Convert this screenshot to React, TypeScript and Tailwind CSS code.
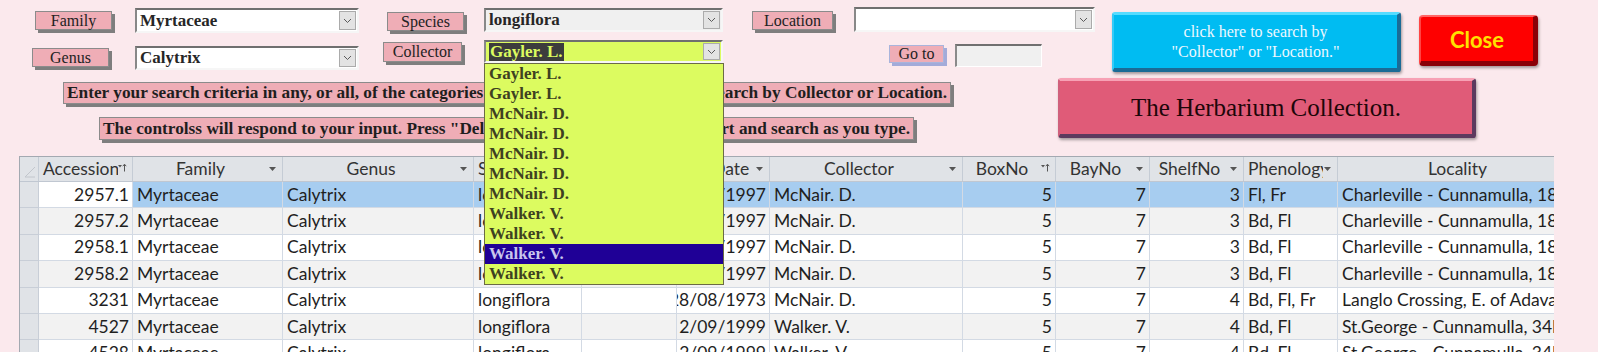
import React from "react";

const SERIF = "font-['Liberation_Serif',serif]";
const SANS = "font-['Lato',sans-serif]";

type P = { className?: string; children?: React.ReactNode };

function Chevron() {
  return (
    <svg width="9" height="6" viewBox="0 0 9 6">
      <path d="M1 1 L4.5 4.5 L8 1" fill="none" stroke="#5a5a5a" strokeWidth="1" />
    </svg>
  );
}

function Combo({ className = "", bg = "bg-white", children }: P & { bg?: string }) {
  return (
    <div
      className={`shrink-0 flex items-stretch border-t-2 border-l-2 border-b-2 border-r-2 border-t-[#6f6f6f] border-l-[#888888] border-b-[#f6f6f6] border-r-[#f6f6f6] ${bg} ${className}`}
    >
      <div
        className={`flex-1 flex items-center pl-[3px] ${SERIF} font-bold text-[17px] text-[#262626] overflow-hidden whitespace-nowrap`}
      >
        {children}
      </div>
      <div className="w-[17px] my-[1px] mr-[1px] bg-[#e3e3e3] border border-[#ababab] flex items-center justify-center">
        <Chevron />
      </div>
    </div>
  );
}

function Label({ className = "", children }: P) {
  return (
    <div
      className={`shrink-0 flex items-center justify-center bg-[#efadb6] border border-[#8b8b8b] shadow-[3px_3px_0_#7e7e7e] ${SERIF} text-[16px] text-[#222] leading-none ${className}`}
    >
      {children}
    </div>
  );
}

function DownTri() {
  return (
    <svg width="7" height="4" viewBox="0 0 7 4" className="absolute right-[6px] top-[10px]">
      <path d="M0 0 H7 L3.5 4 Z" fill="#555" />
    </svg>
  );
}

function SortIcon() {
  return (
    <svg width="9" height="9" viewBox="0 0 9 9" className="absolute right-[5px] top-[6px]">
      <path d="M0 2 H4 L2 4.5 Z" fill="#555" />
      <path d="M6.5 8.5 V1.5" stroke="#555" strokeWidth="1" />
      <path d="M4.8 3.2 L6.5 1.2 L8.2 3.2" fill="none" stroke="#555" strokeWidth="1" />
    </svg>
  );
}

type HProps = {
  children?: React.ReactNode;
  arrow?: boolean;
  sort?: boolean;
  left?: boolean;
};

function HCell({ children, arrow, sort, left }: HProps) {
  const mr = arrow || sort ? "mr-[14px]" : "";
  return (
    <div className="relative h-full border-r border-[#c5ccd5] bg-[#e0e3e7] flex items-center overflow-hidden">
      <div className={`flex-1 min-w-0 flex overflow-hidden ${left ? "justify-start pl-[4px]" : "justify-center"} ${mr}`}>
        <span className="whitespace-nowrap">{children}</span>
      </div>
      {arrow && <DownTri />}
      {sort && <SortIcon />}
    </div>
  );
}

type Row = {
  acc: string;
  date: string;
  col: string;
  shelf: string;
  phen: string;
  loc: string;
};

const rows: Row[] = [
  { acc: "2957.1", date: "14/09/1997", col: "McNair. D.", shelf: "3", phen: "Fl, Fr", loc: "Charleville - Cunnamulla, 18 km S of Charleville" },
  { acc: "2957.2", date: "14/09/1997", col: "McNair. D.", shelf: "3", phen: "Bd, Fl", loc: "Charleville - Cunnamulla, 18 km S of Charleville" },
  { acc: "2958.1", date: "14/09/1997", col: "McNair. D.", shelf: "3", phen: "Bd, Fl", loc: "Charleville - Cunnamulla, 18 km S of Charleville" },
  { acc: "2958.2", date: "14/09/1997", col: "McNair. D.", shelf: "3", phen: "Bd, Fl", loc: "Charleville - Cunnamulla, 18 km S of Charleville" },
  { acc: "3231", date: "28/08/1973", col: "McNair. D.", shelf: "4", phen: "Bd, Fl, Fr", loc: "Langlo Crossing, E. of Adavale" },
  { acc: "4527", date: "2/09/1999", col: "Walker. V.", shelf: "4", phen: "Bd, Fl", loc: "St.George - Cunnamulla, 34km W of St George" },
  { acc: "4528", date: "2/09/1999", col: "Walker. V.", shelf: "4", phen: "Bd, Fl", loc: "St.George - Cunnamulla, 34km W of St George" },
];

const GRID =
  "grid grid-cols-[19px_94px_150px_191px_108px_95px_93px_193px_93px_94px_94px_94px_240px]";

function Cell({ children, right, bg }: { children?: React.ReactNode; right?: boolean; bg: string }) {
  return (
    <div
      className={`h-full flex items-center overflow-hidden whitespace-nowrap border-r border-b border-[#d3dae4] ${bg} ${
        right ? "justify-end pr-[3px]" : "justify-start pl-[4px]"
      }`}
    >
      <span className="shrink-0">{children}</span>
    </div>
  );
}

const listItems = [
  "Gayler. L.",
  "Gayler. L.",
  "McNair. D.",
  "McNair. D.",
  "McNair. D.",
  "McNair. D.",
  "McNair. D.",
  "Walker. V.",
  "Walker. V.",
  "Walker. V.",
  "Walker. V.",
];

export default function App() {
  return (
    <div className="relative w-[1598px] h-[352px] bg-[#fbe9ed] overflow-hidden">
      {/* top form area */}
      <div className="flex h-[156px]">
        <div className="w-[1058px] shrink-0 flex flex-col">
          {/* row 1 */}
          <div className="flex items-start h-[38px] shrink-0">
            <Label className="ml-[35px] mt-[11px] w-[77px] h-[19px]">Family</Label>
            <Combo className="ml-[23px] mt-[8px] w-[224px] h-[25px]">Myrtaceae</Combo>
            <Label className="ml-[28px] mt-[12px] w-[77px] h-[19px]">Species</Label>
            <Combo className="ml-[20px] mt-[8px] w-[239px] h-[24px]" bg="bg-[#f0f0f0]">
              longiflora
            </Combo>
            <Label className="ml-[29px] mt-[11px] w-[81px] h-[19px]">Location</Label>
            <Combo className="ml-[21px] mt-[7px] w-[241px] h-[25px]" />
          </div>
          {/* row 2 */}
          <div className="flex items-start h-[42px] shrink-0">
            <Label className="ml-[32px] mt-[10px] w-[77px] h-[19px]">Genus</Label>
            <Combo className="ml-[26px] mt-[8px] w-[224px] h-[24px]">Calytrix</Combo>
            <Label className="ml-[24px] mt-[4px] w-[79px] h-[20px]">Collector</Label>
            <Combo className="ml-[22px] mt-[2px] w-[239px] h-[23px]" bg="bg-[#dcfb60]">
              <span className="bg-[#3c3c3c] text-[#dcfb60] px-[1px] leading-[18px]">Gayler. L.</span>
            </Combo>
            <div
              className={`shrink-0 ml-[166px] mt-[7px] w-[55px] h-[18px] flex items-center justify-center bg-[#efadb6] border border-[#a9b4dc] shadow-[3px_3px_0_#a3abd9] ${SERIF} text-[16px] text-[#222] leading-none`}
            >
              Go to
            </div>
            <div className="shrink-0 ml-[11px] mt-[6px] w-[87px] h-[23px] bg-[#f0f0f0] border-t-2 border-l-2 border-b border-r border-t-[#707070] border-l-[#8a8a8a] border-b-[#ffffff] border-r-[#ffffff]" />
          </div>
          {/* instruction lines */}
          <div
            className={`ml-[63px] mt-[2px] w-[888px] h-[22px] shrink-0 flex items-center justify-between px-[3px] bg-[#efadb6] border border-[#8b8b8b] shadow-[3px_3px_0_#7e7e7e] ${SERIF} font-bold text-[17.3px] text-[#1e1e1e] whitespace-nowrap overflow-hidden`}
          >
            <span>Enter your search criteria in any, or all, of the categories above.</span>
            <span>Or search by Collector or Location.</span>
          </div>
          <div
            className={`ml-[99px] mt-[13px] w-[815px] h-[23px] shrink-0 flex items-center justify-between px-[3px] bg-[#efadb6] border border-[#8b8b8b] shadow-[3px_3px_0_#7e7e7e] ${SERIF} font-bold text-[17.3px] text-[#1e1e1e] whitespace-nowrap overflow-hidden`}
          >
            <span>The controlss will respond to your input. Press "Delete"</span>
            <span>to clear, restart and search as you type.</span>
          </div>
        </div>

        {/* right buttons */}
        <div className="flex flex-col shrink-0">
          <div className="flex items-start">
            <div
              className={`ml-[54px] mt-[12px] w-[289px] h-[60px] rounded-[3px] bg-[#00bcf2] border-t-[3px] border-l-[2px] border-r-[4px] border-b-[4px] border-t-[#55dcff] border-l-[#33cbf8] border-r-[#1b6b96] border-b-[#1b6b96] shadow-[1px_2px_3px_rgba(0,0,0,0.35)] flex flex-col items-center justify-center ${SERIF} text-[16px] leading-[20px] text-[#eef8ff]`}
            >
              <span>click here to search by</span>
              <span>"Collector" or "Location."</span>
            </div>
            <div
              className={`ml-[18px] mt-[15px] w-[119px] h-[51px] rounded-[4px] bg-[#fe0000] border-t-[2px] border-l-[2px] border-r-[5px] border-b-[5px] border-t-[#ff6666] border-l-[#ff4444] border-r-[#8a0008] border-b-[#8a0008] shadow-[1px_2px_3px_rgba(0,0,0,0.35)] flex items-center justify-center ${SANS} font-bold text-[22px] text-[#ffe100]`}
            >
              Close
            </div>
          </div>
          <div
            className={`mt-[6px] w-[418px] h-[60px] rounded-[3px] bg-[#e05b78] border-t-[3px] border-l-[2px] border-r-[4px] border-b-[4px] border-t-[#f7a1b5] border-l-[#d0607c] border-r-[#5c3a5e] border-b-[#5c3a5e] shadow-[1px_2px_3px_rgba(0,0,0,0.35)] flex items-center justify-center ${SERIF} text-[25px] text-[#1d0609]`}
          >
            The Herbarium Collection.
          </div>
        </div>
      </div>

      {/* datasheet */}
      <div className={`ml-[19px] w-[1535px] overflow-hidden border-t border-l border-[#a3a9b1] ${SANS} text-[17.5px] text-[#1f1f1f]`}>
        <div className={`${GRID} h-[25px] text-[#333] border-b border-[#c0c7d1]`}>
          <div className="relative h-full bg-[#e0e3e7] border-r border-[#c5ccd5]">
            <svg width="12" height="12" viewBox="0 0 12 12" className="absolute left-[4px] bottom-[3px]">
              <path d="M11 1 L1 11 H11" fill="none" stroke="#c2c6cc" strokeWidth="1" />
            </svg>
          </div>
          <HCell left sort>
            Accession
          </HCell>
          <HCell arrow>Family</HCell>
          <HCell arrow>Genus</HCell>
          <HCell arrow left>
            Species
          </HCell>
          <HCell arrow>Subspecies</HCell>
          <HCell arrow>CollDate</HCell>
          <HCell arrow>Collector</HCell>
          <HCell sort>BoxNo</HCell>
          <HCell arrow>BayNo</HCell>
          <HCell arrow>ShelfNo</HCell>
          <HCell arrow left>
            Phenology
          </HCell>
          <HCell>Locality</HCell>
        </div>
        {rows.map((r, i) => {
          const base = i % 2 === 1 ? "bg-[#f2f2f2]" : "bg-white";
          const sel = i === 0 ? "bg-[#a7cdf0]" : base;
          return (
            <div key={i} className={`${GRID} h-[26.4px]`}>
              <div className="h-full bg-[#e0e3e7] border-r border-b border-[#c8ced7]" />
              <Cell right bg={i === 0 ? "bg-white" : base}>
                {r.acc}
              </Cell>
              <Cell bg={sel}>Myrtaceae</Cell>
              <Cell bg={sel}>Calytrix</Cell>
              <Cell bg={sel}>longiflora</Cell>
              <Cell bg={sel}>{""}</Cell>
              <Cell right bg={sel}>
                {r.date}
              </Cell>
              <Cell bg={sel}>{r.col}</Cell>
              <Cell right bg={sel}>
                5
              </Cell>
              <Cell right bg={sel}>
                7
              </Cell>
              <Cell right bg={sel}>
                {r.shelf}
              </Cell>
              <Cell bg={sel}>{r.phen}</Cell>
              <Cell bg={sel}>{r.loc}</Cell>
            </div>
          );
        })}
      </div>

      {/* open combo list */}
      <div className={`absolute left-[484px] top-[63px] w-[240px] z-10 bg-[#dcfb60] border border-[#6b6b45] ${SERIF} font-bold text-[17px]`}>
        {listItems.map((t, i) => (
          <div
            key={i}
            className={`h-[20px] leading-[20px] pl-[4px] whitespace-nowrap ${
              i === 9 ? "bg-[#1f0096] text-[#c9c6ec]" : "text-[#3e4121]"
            }`}
          >
            {t}
          </div>
        ))}
      </div>
    </div>
  );
}
